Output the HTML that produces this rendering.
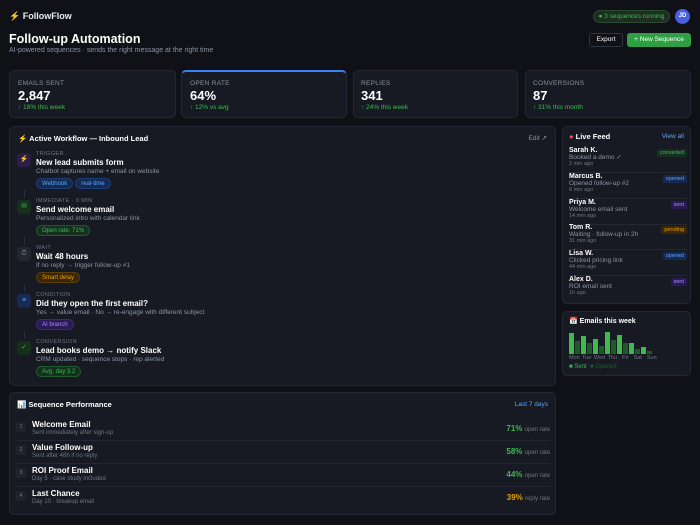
<!DOCTYPE html>
<html><head><style>
*{box-sizing:border-box;margin:0;padding:0}
body{width:700px;height:525px;background:#0f1117;font-family:"Liberation Sans",sans-serif;color:#e6edf3;position:relative;overflow:hidden;font-size:7px}
.abs{position:absolute}
.card{position:absolute;background:#171a23;border:1px solid #242833;border-radius:5px}
.lbl{font-size:6.5px;color:#8b93a1;letter-spacing:.3px}
.big{font-size:13px;font-weight:bold;color:#fff;margin-top:1px}
.up{font-size:6.5px;color:#3fb950;margin-top:1px}
.tag{display:inline-block;font-size:6px;padding:1.5px 5px;border-radius:6px;margin-right:2px}
.step{position:absolute;left:7px}
.ic{position:absolute;left:0;top:2px;width:14px;height:14px;border-radius:3px;font-size:7px;text-align:center;line-height:14px}
.st{position:absolute;left:19px;top:0;width:400px}
.k{font-size:5.5px;color:#6e7681;letter-spacing:.4px}
.t{font-size:8px;font-weight:bold;color:#fff;margin-top:1px}
.d{font-size:6.5px;color:#8b93a1;margin:1px 0 3px}
.fi{position:absolute;left:6px;width:118px;border-bottom:1px solid #242833;height:26px}
.fi b{font-size:7px;color:#fff;display:block}
.fi span{font-size:6.5px;color:#8b93a1;display:block;line-height:7px}
.fi i{font-style:normal;font-size:5.5px;color:#6e7681;display:block}
.fb{position:absolute;right:0;top:2px;font-size:5.5px;padding:1px 3px;border-radius:2px}
.row{position:absolute;left:6px;width:534px;height:23px;border-bottom:1px solid #232733}
.num{position:absolute;left:0;top:4px;width:10px;height:10px;background:#1f232c;border-radius:2px;font-size:5.5px;color:#6e7681;text-align:center;line-height:10px}
.row b{position:absolute;left:16px;top:2px;font-size:8px;color:#fff}
.row span{position:absolute;left:16px;top:12px;font-size:6px;color:#6e7681}
.row em{position:absolute;right:0;top:6px;font-style:normal;font-size:8px;font-weight:bold}
.row em small{font-size:6px;color:#6e7681;font-weight:normal}
.seg{position:absolute;left:23px;width:1px;height:8px;background:#2a2e38}
</style></head><body>
<div class="abs" style="left:9px;top:11px;font-size:9px;font-weight:bold"><span style="color:#f5c518">⚡</span> FollowFlow</div>
<div class="abs" style="left:9px;top:32px;font-size:12.5px;font-weight:bold;color:#fff">Follow-up Automation</div>
<div class="abs" style="left:9px;top:47px;font-size:7px;color:#8b93a1">AI-powered sequences · sends the right message at the right time</div>
<div class="abs" style="left:593px;top:10px;width:77px;height:13px;border-radius:7px;background:#1b2e1f;border:1px solid #2a4a2f;color:#3fb950;font-size:6.5px;line-height:11px;text-align:center">● 3 sequences running</div>
<div class="abs" style="left:675px;top:9px;width:15px;height:15px;border-radius:50%;background:#4a5fe0;color:#fff;font-size:6px;font-weight:bold;text-align:center;line-height:15px">JD</div>
<div class="abs" style="left:589px;top:33px;width:34px;height:14px;border:1px solid #30363d;border-radius:3px;background:#0f1117;font-size:6.5px;color:#fff;text-align:center;line-height:12px">Export</div>
<div class="abs" style="left:627px;top:33px;width:64px;height:14px;border-radius:3px;background:#2ea043;font-size:6.5px;color:#fff;text-align:center;line-height:14px">+ New Sequence</div>

<div class="card" style="left:9px;top:70px;width:167px;height:48px;padding:9px 8px"><div class="lbl">EMAILS SENT</div><div class="big">2,847</div><div class="up">↑ 18% this week</div></div>
<div class="card" style="left:181px;top:70px;width:166px;height:48px;padding:8px 8px;border-top:2px solid #3b82f6"><div class="lbl">OPEN RATE</div><div class="big">64%</div><div class="up">↑ 12% vs avg</div></div>
<div class="card" style="left:353px;top:70px;width:165px;height:48px;padding:9px 7px"><div class="lbl">REPLIES</div><div class="big">341</div><div class="up">↑ 24% this week</div></div>
<div class="card" style="left:525px;top:70px;width:166px;height:48px;padding:9px 7px"><div class="lbl">CONVERSIONS</div><div class="big">87</div><div class="up">↑ 31% this month</div></div>

<div class="card" style="left:9px;top:126px;width:547px;height:260px">
<div class="abs" style="left:8px;top:7px;font-size:7.5px;font-weight:bold;color:#fff"><span style="color:#f5c518">⚡</span> Active Workflow — Inbound Lead</div>
<div class="abs" style="right:8px;top:7px;font-size:6.5px;color:#8b93a1">Edit ↗</div>
<div class="seg" style="top:63px;left:14px"></div><div class="seg" style="top:110px;left:14px"></div><div class="seg" style="top:157px;left:14px"></div><div class="seg" style="top:204px;left:14px"></div>
<div class="step" style="top:24px"><div class="ic" style="background:#2a1d47;color:#f5c518">⚡</div><div class="st"><div class="k">TRIGGER</div><div class="t">New lead submits form</div><div class="d">Chatbot captures name + email on website</div><span class="tag" style="background:#142a52;color:#58a6ff;border:1px solid #1f3d75">Webhook</span><span class="tag" style="background:#142a52;color:#58a6ff;border:1px solid #1f3d75">real-time</span></div></div>
<div class="step" style="top:71px"><div class="ic" style="background:#16301c;color:#3fb950">✉</div><div class="st"><div class="k">IMMEDIATE · 0 MIN</div><div class="t">Send welcome email</div><div class="d">Personalized intro with calendar link</div><span class="tag" style="background:#163020;color:#3fb950;border:1px solid #1f5a2c">Open rate: 71%</span></div></div>
<div class="step" style="top:118px"><div class="ic" style="background:#22262f;color:#8b93a1">⏱</div><div class="st"><div class="k">WAIT</div><div class="t">Wait 48 hours</div><div class="d">If no reply → trigger follow-up #1</div><span class="tag" style="background:#3a2708;color:#e3a008;border:1px solid #5a3d0c">Smart delay</span></div></div>
<div class="step" style="top:165px"><div class="ic" style="background:#172a52;color:#58a6ff">≡</div><div class="st"><div class="k">CONDITION</div><div class="t">Did they open the first email?</div><div class="d">Yes → value email · No → re-engage with different subject</div><span class="tag" style="background:#2a1a55;color:#a78bfa;border:1px solid #3d2a75">AI branch</span></div></div>
<div class="step" style="top:212px"><div class="ic" style="background:#16301c;color:#3fb950">✓</div><div class="st"><div class="k">CONVERSION</div><div class="t">Lead books demo → notify Slack</div><div class="d">CRM updated · sequence stops · rep alerted</div><span class="tag" style="background:#163020;color:#3fb950;border:1px solid #1f5a2c">Avg. day 3.2</span></div></div>
</div>

<div class="card" style="left:562px;top:126px;width:129px;height:178px">
<div class="abs" style="left:6px;top:5px;font-size:7.5px;font-weight:bold;color:#fff"><span style="color:#f85149">●</span> Live Feed</div>
<div class="abs" style="right:6px;top:6px;font-size:6.5px;color:#58a6ff">View all</div>
<div class="fi" style="top:20px"><b>Sarah K.</b><span>Booked a demo ✓</span><i>2 min ago</i><div class="fb" style="background:#163020;color:#3fb950">converted</div></div>
<div class="fi" style="top:46px"><b>Marcus B.</b><span>Opened follow-up #2</span><i>8 min ago</i><div class="fb" style="background:#142a52;color:#58a6ff">opened</div></div>
<div class="fi" style="top:72px"><b>Priya M.</b><span>Welcome email sent</span><i>14 min ago</i><div class="fb" style="background:#2a1a55;color:#a78bfa">sent</div></div>
<div class="fi" style="top:97px"><b>Tom R.</b><span>Waiting · follow-up in 2h</span><i>31 min ago</i><div class="fb" style="background:#3a2708;color:#e3a008">pending</div></div>
<div class="fi" style="top:123px"><b>Lisa W.</b><span>Clicked pricing link</span><i>44 min ago</i><div class="fb" style="background:#142a52;color:#58a6ff">opened</div></div>
<div class="fi" style="top:149px;border:none"><b>Alex D.</b><span>ROI email sent</span><i>1h ago</i><div class="fb" style="background:#2a1a55;color:#a78bfa">sent</div></div>
</div>

<div class="card" style="left:562px;top:311px;width:129px;height:65px">
<div class="abs" style="left:6px;top:5px;font-size:7px;font-weight:bold;color:#fff">📅 Emails this week</div>
<svg class="abs" style="left:6px;top:20px" width="90" height="22">
<g fill="#3fb950"><rect x="0" y="1" width="5" height="21"/><rect x="12" y="4" width="5" height="18"/><rect x="24" y="7" width="5" height="15"/><rect x="36" y="0" width="5" height="22"/><rect x="48" y="3" width="5" height="19"/><rect x="60" y="11" width="5" height="11"/><rect x="72" y="15" width="5" height="7"/></g>
<g fill="#1e5a2a"><rect x="6" y="9" width="5" height="13"/><rect x="18" y="11" width="5" height="11"/><rect x="30" y="14" width="5" height="8"/><rect x="42" y="8" width="5" height="14"/><rect x="54" y="11" width="5" height="11"/><rect x="66" y="17" width="5" height="5"/><rect x="78" y="19" width="5" height="3"/></g></svg>
<div class="abs" style="left:6px;top:43px;font-size:5.5px;color:#6e7681;word-spacing:1px">Mon Tue Wed Thu &nbsp;Fri &nbsp;Sat &nbsp;Sun</div>
<div class="abs" style="left:6px;top:52px;font-size:6px;color:#3fb950">■ Sent &nbsp;<span style="color:#1e5a2a">■ Opened</span></div>
</div>

<div class="card" style="left:9px;top:392px;width:547px;height:123px">
<div class="abs" style="left:7px;top:7px;font-size:7.5px;font-weight:bold;color:#fff">📊 Sequence Performance</div>
<div class="abs" style="right:7px;top:8px;font-size:6.5px;color:#58a6ff">Last 7 days</div>
<div class="row" style="top:25px"><div class="num">1</div><b>Welcome Email</b><span>Sent immediately after sign-up</span><em style="color:#3fb950">71% <small>open rate</small></em></div>
<div class="row" style="top:48px"><div class="num">2</div><b>Value Follow-up</b><span>Sent after 48h if no reply</span><em style="color:#3fb950">58% <small>open rate</small></em></div>
<div class="row" style="top:71px"><div class="num">3</div><b>ROI Proof Email</b><span>Day 5 · case study included</span><em style="color:#3fb950">44% <small>open rate</small></em></div>
<div class="row" style="top:94px;border:none"><div class="num">4</div><b>Last Chance</b><span>Day 10 · breakup email</span><em style="color:#e3a008">39% <small>reply rate</small></em></div>
</div>
</body></html>
